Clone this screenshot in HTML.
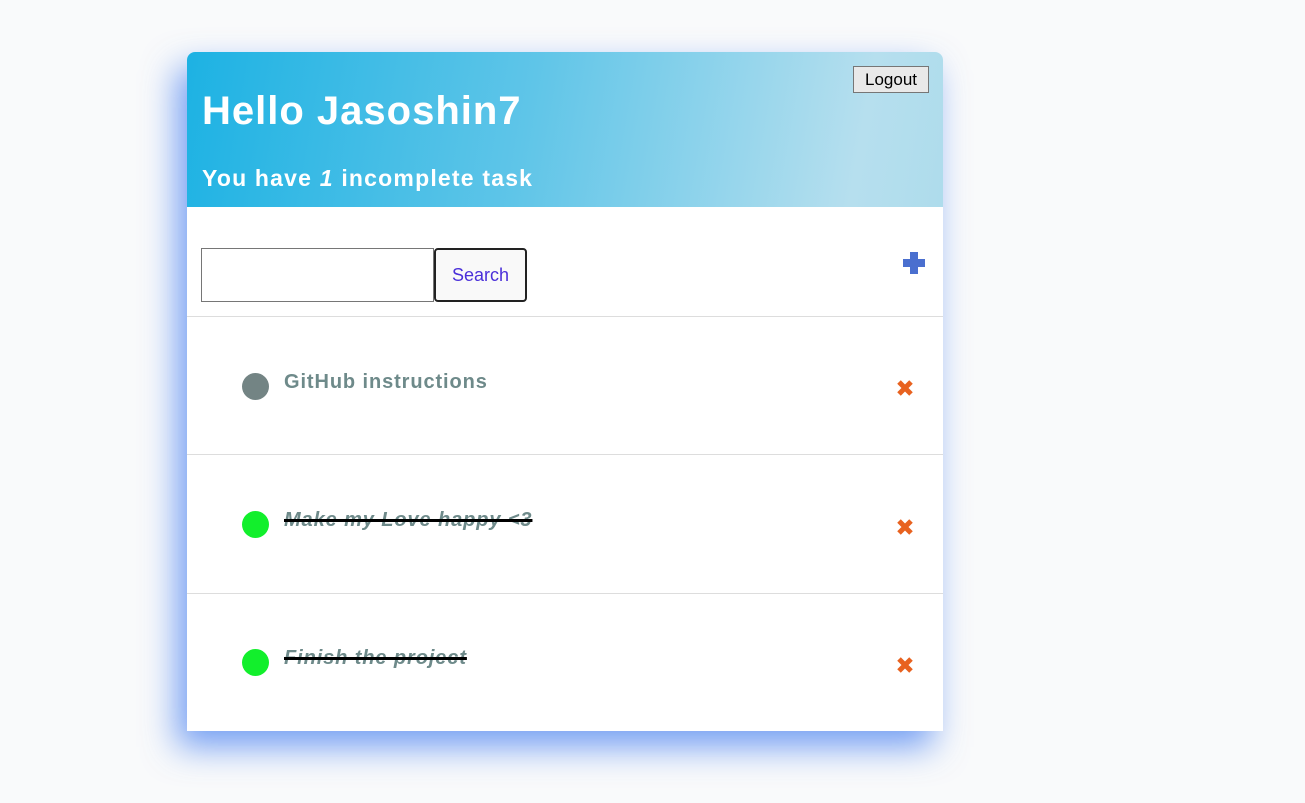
<!DOCTYPE html>
<html><head><style>
body{margin:0;background:#f9fafb;width:1305px;height:803px;overflow:hidden;font-family:"Liberation Sans",sans-serif;}
.card{position:absolute;left:187px;top:52px;width:756px;height:679px;background:#fff;border-radius:8px 8px 0 0;box-shadow:-10px 16px 34px rgba(60,120,240,.7);}
.head{height:155px;border-radius:8px 8px 0 0;background:linear-gradient(100deg,#1db2e3 0%,#5fc5e8 45%,#b6dfee 88%,#aedcec 100%);position:relative;color:#fff;}
h1{margin:0;position:absolute;left:15px;top:37px;font-size:40px;font-weight:bold;letter-spacing:1px;}
h2{margin:0;position:absolute;left:15px;top:113px;font-size:23px;font-weight:bold;letter-spacing:1.2px;}
.logout{position:absolute;left:666px;top:14px;width:76px;height:27px;box-sizing:border-box;border:1px solid #767676;background:#e9e9e9;font-size:17px;color:#000;text-align:center;line-height:25px;}
.inp{position:absolute;left:14px;top:196px;width:233px;height:54px;box-sizing:border-box;border:1px solid #767676;}
.btn{position:absolute;left:247px;top:196px;width:93px;height:54px;box-sizing:border-box;border:2px solid #222;border-radius:4px;background:#f9f9f9;color:#4a2fd9;font-size:18px;text-align:center;line-height:50px;}
.plus{position:absolute;left:715px;top:200px;}
.row{position:absolute;left:0;width:756px;height:138px;border-top:1px solid #ddd;}
.dot{position:absolute;left:55px;width:27px;height:27px;border-radius:50%;}
.t{position:absolute;left:97px;font-size:20px;font-weight:bold;color:#6e8a8a;letter-spacing:0.9px;}
.done{font-style:italic;text-decoration:line-through;text-decoration-color:#000;text-decoration-thickness:3px;}
.x{position:absolute;left:709px;}
</style></head><body>
<div class="card">
 <div class="head">
  <h1>Hello Jasoshin7</h1>
  <h2>You have <i>1</i> incomplete task</h2>
  <div class="logout">Logout</div>
 </div>
 <div class="inp"></div>
 <div class="btn">Search</div>
 <svg class="plus" width="24" height="24" viewBox="0 0 24 24"><path d="M8 0h8v7h7v8h-7v7h-8v-7h-7v-8h7z" fill="#4a6fcf"/></svg>
 <div class="row" style="top:264px">
  <div class="dot" style="top:56px;background:#738484"></div>
  <div class="t" style="top:54px">GitHub instructions</div>
  <svg class="x" style="top:62px" width="18" height="18" viewBox="0 0 18 18"><path d="M3 3L15 15M15 3L3 15" stroke="#e8621f" stroke-width="5"/></svg>
 </div>
 <div class="row" style="top:402px">
  <div class="dot" style="top:56px;background:#12ef2c"></div>
  <div class="t done" style="top:54px">Make my Love happy &lt;3</div>
  <svg class="x" style="top:63px" width="18" height="18" viewBox="0 0 18 18"><path d="M3 3L15 15M15 3L3 15" stroke="#e8621f" stroke-width="5"/></svg>
 </div>
 <div class="row" style="top:541px">
  <div class="dot" style="top:55px;background:#12ef2c"></div>
  <div class="t done" style="top:53px">Finish the project</div>
  <svg class="x" style="top:62px" width="18" height="18" viewBox="0 0 18 18"><path d="M3 3L15 15M15 3L3 15" stroke="#e8621f" stroke-width="5"/></svg>
 </div>
</div>
</body></html>
